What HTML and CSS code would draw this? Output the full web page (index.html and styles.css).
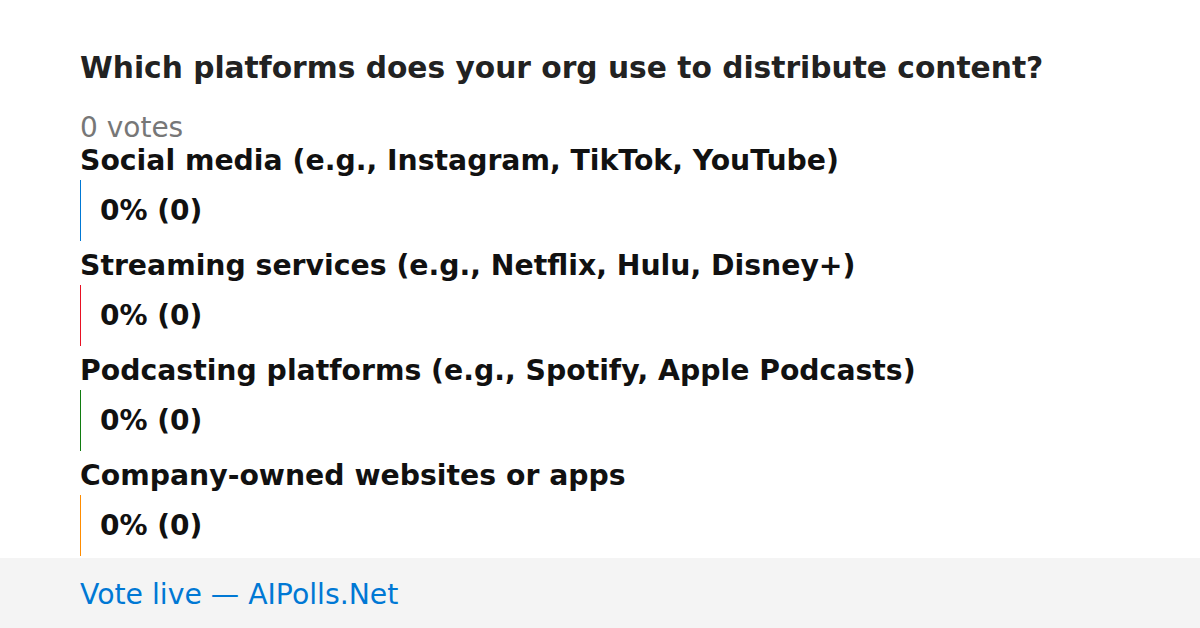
FILE: index.html
```html
<!DOCTYPE html>
<html lang="en">
<head>
    <meta charset="UTF-8">
    <title>Poll</title>
    <link rel="stylesheet" href="styles.css">
</head>
<body>

<div class="poll">
    <h1 class="question">Which platforms does your org use to distribute content?</h1>
    <div class="votes">0 votes</div>

    <div class="option">
        <div class="label">Social media (e.g., Instagram, TikTok, YouTube)</div>
        <div class="bar blue">0% (0)</div>
    </div>

    <div class="option">
        <div class="label">Streaming services (e.g., Netflix, Hulu, Disney+)</div>
        <div class="bar red">0% (0)</div>
    </div>

    <div class="option">
        <div class="label">Podcasting platforms (e.g., Spotify, Apple Podcasts)</div>
        <div class="bar green">0% (0)</div>
    </div>

    <div class="option">
        <div class="label">Company-owned websites or apps</div>
        <div class="bar orange">0% (0)</div>
    </div>
</div>

<div class="footer">Vote live — AIPolls.Net</div>

</body>
</html>
```

FILE: styles.css
```css
body {
    margin: 0;
    font-family: "DejaVu Sans", sans-serif;
    background: #fff;
    width: 1200px;
    height: 628px;
    overflow: hidden;
    display: flex;
    flex-direction: column;
}
.poll {
    flex: 1;
    min-height: 0;
    padding: 50px 80px 0;
}
.question {
    margin: 0;
    font-size: 29.7px;
    line-height: 36px;
    color: #222;
}
.votes {
    margin-top: 26px;
    font-size: 28px;
    line-height: 32px;
    color: #777;
}
.option {
    margin-bottom: 8px;
}
.option:last-child {
    margin-bottom: 0;
}
.label {
    font-size: 28.3px;
    font-weight: bold;
    line-height: 34px;
    padding-bottom: 2px;
    color: #111;
}
.bar {
    height: 61px;
    display: flex;
    align-items: center;
    padding-left: 19px;
    border-left: 1px solid;
    font-size: 28px;
    font-weight: bold;
    color: #111;
}
.blue { border-color: #0078d4; }
.red { border-color: #e81123; }
.green { border-color: #107c10; }
.orange { border-color: #ff8c00; }
.footer {
    height: 70px;
    box-sizing: border-box;
    flex-shrink: 0;
    background: #f4f4f4;
    padding: 3px 0 0 80px;
    display: flex;
    align-items: center;
    font-size: 28.3px;
    color: #0078d4;
}
```
